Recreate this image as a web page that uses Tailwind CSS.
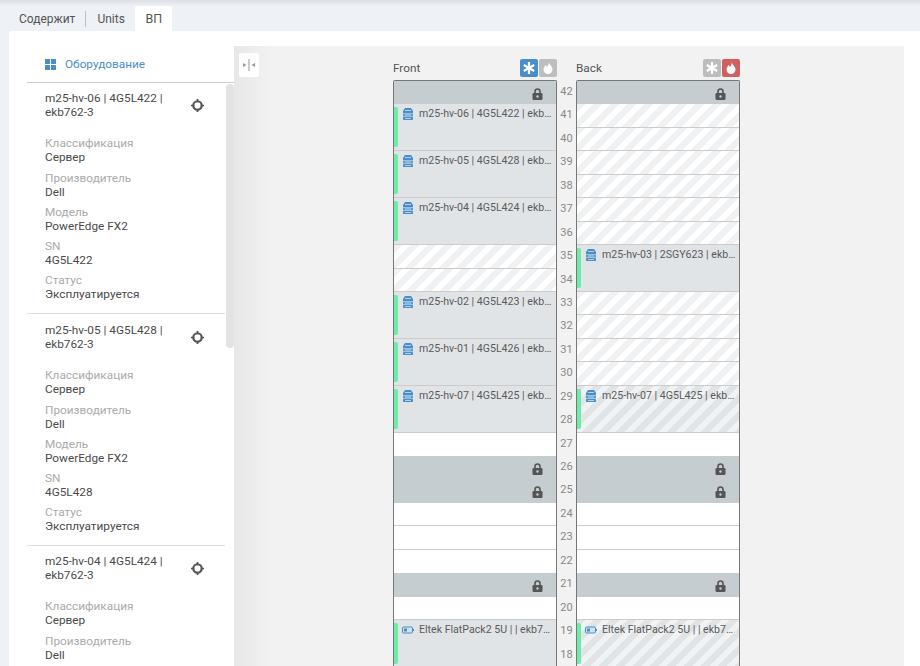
<!DOCTYPE html>
<html><head><meta charset="utf-8"><script src="https://cdn.jsdelivr.net/npm/@tailwindcss/browser@4"></script></head>
<body class="w-[920px] h-[666px] overflow-hidden bg-[#eef1f6] font-['Roboto',sans-serif] text-[11.8px] leading-[14px] text-[#4a4a4a]">
<div class="h-[6px] bg-gradient-to-b from-[#dcdfe5] to-[#eef1f6]"></div>
<div class="flex h-[25px] pl-[9px] items-stretch text-[12px] text-[#555]">
<div class="px-[10px] flex items-center"><span>Содержит</span></div>
<div class="w-px h-[16px] my-auto bg-[#b9c0c8]"></div>
<div class="pl-[11px] pr-[10px] flex items-center"><span>Units</span></div>
<div class="w-[37px] pl-px justify-center bg-white rounded-t-[2px] flex items-center text-[12.5px]"><span>ВП</span></div>
</div>
<div class="ml-[9px] h-[635px] bg-white rounded-tl-[2px] flex pr-[16px]">
<aside class="w-[225px] shrink-0 pl-[18px] flex flex-col overflow-hidden">
<div class="h-[52px] shrink-0 border-b border-[#ccc] flex items-center pl-[18px] pt-[22px] pb-[7px] text-[#4a8ec9]">
<svg class="w-[11px] h-[11px] mr-[9px]" viewBox="0 0 11 11" fill="#4a8ec9"><rect width="5" height="5"/><rect x="6" width="5" height="5"/><rect y="6" width="5" height="5"/><rect x="6" y="6" width="5" height="5"/></svg>
<span>Оборудование</span></div>
<div class="relative flex-1 overflow-hidden">
<div class="absolute right-0 top-[1px] w-[8px] h-[264px] rounded-[4px] bg-[#e3e3e3]"></div>
<section class="w-[198px] h-[231px] border-b border-[#ddd] pl-[18px] pt-[8px]">
<div class="flex items-center w-[159px] justify-between"><div class="w-[125px]">m25-hv-06 | 4G5L422 | ekb762-3</div><svg class="w-[13px] h-[13px]" viewBox="0 0 12 12" fill="none" stroke="#555"><circle cx="6" cy="6" r="3.900" stroke-width="2"/><path d="M6 0v3M6 9v3M0 6h3M9 6h3" stroke-width="1.600"/></svg></div>
<dl class="mt-[17.400px] flex flex-col gap-[6.200px]"><div><dt class="text-[#aaa]">Классификация</dt><dd>Сервер</dd></div><div><dt class="text-[#aaa]">Производитель</dt><dd>Dell</dd></div><div><dt class="text-[#aaa]">Модель</dt><dd>PowerEdge FX2</dd></div><div><dt class="text-[#aaa]">SN</dt><dd>4G5L422</dd></div><div><dt class="text-[#aaa]">Статус</dt><dd>Эксплуатируется</dd></div></dl>
</section>
<section class="w-[198px] h-[232px] border-b border-[#ddd] pl-[18px] pt-[9px]">
<div class="flex items-center w-[159px] justify-between"><div class="w-[125px]">m25-hv-05 | 4G5L428 | ekb762-3</div><svg class="w-[13px] h-[13px]" viewBox="0 0 12 12" fill="none" stroke="#555"><circle cx="6" cy="6" r="3.900" stroke-width="2"/><path d="M6 0v3M6 9v3M0 6h3M9 6h3" stroke-width="1.600"/></svg></div>
<dl class="mt-[17.400px] flex flex-col gap-[6.200px]"><div><dt class="text-[#aaa]">Классификация</dt><dd>Сервер</dd></div><div><dt class="text-[#aaa]">Производитель</dt><dd>Dell</dd></div><div><dt class="text-[#aaa]">Модель</dt><dd>PowerEdge FX2</dd></div><div><dt class="text-[#aaa]">SN</dt><dd>4G5L428</dd></div><div><dt class="text-[#aaa]">Статус</dt><dd>Эксплуатируется</dd></div></dl>
</section>
<section class="w-[198px] pl-[18px] pt-[8px]">
<div class="flex items-center w-[159px] justify-between"><div class="w-[125px]">m25-hv-04 | 4G5L424 | ekb762-3</div><svg class="w-[13px] h-[13px]" viewBox="0 0 12 12" fill="none" stroke="#555"><circle cx="6" cy="6" r="3.900" stroke-width="2"/><path d="M6 0v3M6 9v3M0 6h3M9 6h3" stroke-width="1.600"/></svg></div>
<dl class="mt-[17.400px] flex flex-col gap-[6.200px]"><div><dt class="text-[#aaa]">Классификация</dt><dd>Сервер</dd></div><div><dt class="text-[#aaa]">Производитель</dt><dd>Dell</dd></div></dl>
</section>
</div>
</aside>
<main class="flex-1 mt-[15px] bg-[linear-gradient(90deg,#e7e7e7,#f2f2f2_36px)] flex items-start overflow-hidden">
<button class="w-[20px] h-[24px] ml-[5px] mt-[7px] shrink-0 bg-white rounded-[2px] flex items-center justify-center">
<svg class="w-[14px] h-[14px]" viewBox="0 0 14 14"><path d="M1 5l3.500 2L1 9z" fill="#999"/><path d="M13 5L9.500 7 13 9z" fill="#999"/><rect x="6.500" y="1" width="1" height="12" fill="#8c9aa6"/></svg>
</button>
<div class="ml-[134px] pt-[13px] w-[347px] shrink-0">
<div class="flex h-[21px]">
<div class="w-[164px] flex justify-between items-start"><span class="mt-[2px] text-[#555]">Front</span>
<div class="flex gap-px">
<span class="w-[18px] h-[18px] rounded-[2px] bg-[#4a8ec9] flex items-center justify-center"><svg class="w-[12px] h-[12px]" viewBox="0 0 12 12" stroke="#fff" stroke-width="2.200"><path d="M6 0v12M.8 3l10.400 6M.8 9l10.400-6"/></svg></span>
<span class="w-[18px] h-[18px] rounded-[2px] bg-[#bdbdbd] flex items-center justify-center"><svg class="w-[12px] h-[12px]" viewBox="0 0 12 12" fill="#fff"><path d="M6.500 0c.5 2.500 4 4 4 7.500A4.500 4.500 0 0 1 6 12a4.500 4.500 0 0 1-4.500-4.500C1.500 5.500 3 4.500 3.500 3c.8.5 1.200 1.300 1.300 2C6 4 7 2 6.500 0z"/></svg></span>
</div></div>
<div class="w-[19px]"></div>
<div class="w-[164px] flex justify-between items-start"><span class="mt-[2px] text-[#555]">Back</span>
<div class="flex gap-px">
<span class="w-[18px] h-[18px] rounded-[2px] bg-[#bdbdbd] flex items-center justify-center"><svg class="w-[12px] h-[12px]" viewBox="0 0 12 12" stroke="#fff" stroke-width="2.200"><path d="M6 0v12M.8 3l10.400 6M.8 9l10.400-6"/></svg></span>
<span class="w-[18px] h-[18px] rounded-[2px] bg-[#d0605f] flex items-center justify-center"><svg class="w-[12px] h-[12px]" viewBox="0 0 12 12" fill="#fff"><path d="M6.500 0c.5 2.500 4 4 4 7.500A4.500 4.500 0 0 1 6 12a4.500 4.500 0 0 1-4.500-4.500C1.500 5.500 3 4.500 3.500 3c.8.5 1.200 1.300 1.300 2C6 4 7 2 6.500 0z"/></svg></span>
</div></div>
</div>
<div class="flex items-start">
<!-- Front -->
<div class="w-[164px] border border-[#777] border-b-0 rounded-t-[2px] bg-white text-[#5a5a5a] text-[10.600px]">
<div class="h-[23.450px] bg-[#c5cdd0] flex items-center justify-end pr-[13px]"><svg class="w-[11px] h-[12px] mt-[2px]" viewBox="0 0 11 12"><path d="M3 5V3.500a2.500 2.500 0 0 1 5 0V5" fill="none" stroke="#555" stroke-width="1.600"/><rect x=".5" y="5" width="10" height="7" rx="1.200" fill="#555"/><circle cx="5.500" cy="8.500" r="1.200" fill="#c5cdd0"/></svg></div>
<div class="h-[46.900px] bg-[#e1e4e7] border-b border-[#ccc] flex"><div class="w-[4px] shrink-0 mt-[3px] mb-[3px] rounded-r-[2px] bg-[#6eeba6]"></div><div class="flex min-w-0 mt-[3px] pl-[4px] pr-[3px]"><svg class="w-[12px] h-[12px] mt-px shrink-0" viewBox="0 0 12 12"><path d="M3 0h6l2 3v2H1V3z" fill="#4a8ec9"/><rect x="1" y="5.500" width="10" height="3" fill="#5b9bd0"/><rect x="1" y="9" width="10" height="3" rx=".8" fill="#4a8ec9"/><path d="M3 2.500h6M3 7h6M3 10.500h6" stroke="#cfe2f2" stroke-width=".8"/></svg><span class="truncate ml-[5px]">m25-hv-06 | 4G5L422 | ekb762-3</span></div></div>
<div class="h-[46.900px] bg-[#e1e4e7] border-b border-[#ccc] flex"><div class="w-[4px] shrink-0 mt-[3px] mb-[3px] rounded-r-[2px] bg-[#6eeba6]"></div><div class="flex min-w-0 mt-[3px] pl-[4px] pr-[3px]"><svg class="w-[12px] h-[12px] mt-px shrink-0" viewBox="0 0 12 12"><path d="M3 0h6l2 3v2H1V3z" fill="#4a8ec9"/><rect x="1" y="5.500" width="10" height="3" fill="#5b9bd0"/><rect x="1" y="9" width="10" height="3" rx=".8" fill="#4a8ec9"/><path d="M3 2.500h6M3 7h6M3 10.500h6" stroke="#cfe2f2" stroke-width=".8"/></svg><span class="truncate ml-[5px]">m25-hv-05 | 4G5L428 | ekb762-3</span></div></div>
<div class="h-[46.900px] bg-[#e1e4e7] border-b border-[#ccc] flex"><div class="w-[4px] shrink-0 mt-[3px] mb-[3px] rounded-r-[2px] bg-[#6eeba6]"></div><div class="flex min-w-0 mt-[3px] pl-[4px] pr-[3px]"><svg class="w-[12px] h-[12px] mt-px shrink-0" viewBox="0 0 12 12"><path d="M3 0h6l2 3v2H1V3z" fill="#4a8ec9"/><rect x="1" y="5.500" width="10" height="3" fill="#5b9bd0"/><rect x="1" y="9" width="10" height="3" rx=".8" fill="#4a8ec9"/><path d="M3 2.500h6M3 7h6M3 10.500h6" stroke="#cfe2f2" stroke-width=".8"/></svg><span class="truncate ml-[5px]">m25-hv-04 | 4G5L424 | ekb762-3</span></div></div>
<div class="h-[23.450px] border-b border-[#ccc] bg-[repeating-linear-gradient(135deg,#f0f1f3_0,#f0f1f3_6px,#fff_6px,#fff_12px)]"></div>
<div class="h-[23.450px] border-b border-[#ccc] bg-[repeating-linear-gradient(135deg,#f0f1f3_0,#f0f1f3_6px,#fff_6px,#fff_12px)]"></div>
<div class="h-[46.900px] bg-[#e1e4e7] border-b border-[#ccc] flex"><div class="w-[4px] shrink-0 mt-[3px] mb-[3px] rounded-r-[2px] bg-[#6eeba6]"></div><div class="flex min-w-0 mt-[3px] pl-[4px] pr-[3px]"><svg class="w-[12px] h-[12px] mt-px shrink-0" viewBox="0 0 12 12"><path d="M3 0h6l2 3v2H1V3z" fill="#4a8ec9"/><rect x="1" y="5.500" width="10" height="3" fill="#5b9bd0"/><rect x="1" y="9" width="10" height="3" rx=".8" fill="#4a8ec9"/><path d="M3 2.500h6M3 7h6M3 10.500h6" stroke="#cfe2f2" stroke-width=".8"/></svg><span class="truncate ml-[5px]">m25-hv-02 | 4G5L423 | ekb762-3</span></div></div>
<div class="h-[46.900px] bg-[#e1e4e7] border-b border-[#ccc] flex"><div class="w-[4px] shrink-0 mt-[3px] mb-[3px] rounded-r-[2px] bg-[#6eeba6]"></div><div class="flex min-w-0 mt-[3px] pl-[4px] pr-[3px]"><svg class="w-[12px] h-[12px] mt-px shrink-0" viewBox="0 0 12 12"><path d="M3 0h6l2 3v2H1V3z" fill="#4a8ec9"/><rect x="1" y="5.500" width="10" height="3" fill="#5b9bd0"/><rect x="1" y="9" width="10" height="3" rx=".8" fill="#4a8ec9"/><path d="M3 2.500h6M3 7h6M3 10.500h6" stroke="#cfe2f2" stroke-width=".8"/></svg><span class="truncate ml-[5px]">m25-hv-01 | 4G5L426 | ekb762-3</span></div></div>
<div class="h-[46.900px] bg-[#e1e4e7] border-b border-[#ccc] flex"><div class="w-[4px] shrink-0 mt-[3px] mb-[3px] rounded-r-[2px] bg-[#6eeba6]"></div><div class="flex min-w-0 mt-[3px] pl-[4px] pr-[3px]"><svg class="w-[12px] h-[12px] mt-px shrink-0" viewBox="0 0 12 12"><path d="M3 0h6l2 3v2H1V3z" fill="#4a8ec9"/><rect x="1" y="5.500" width="10" height="3" fill="#5b9bd0"/><rect x="1" y="9" width="10" height="3" rx=".8" fill="#4a8ec9"/><path d="M3 2.500h6M3 7h6M3 10.500h6" stroke="#cfe2f2" stroke-width=".8"/></svg><span class="truncate ml-[5px]">m25-hv-07 | 4G5L425 | ekb762-3</span></div></div>
<div class="h-[23.450px]"></div>
<div class="h-[23.450px] bg-[#c5cdd0] flex items-center justify-end pr-[13px]"><svg class="w-[11px] h-[12px] mt-[2px]" viewBox="0 0 11 12"><path d="M3 5V3.500a2.500 2.500 0 0 1 5 0V5" fill="none" stroke="#555" stroke-width="1.600"/><rect x=".5" y="5" width="10" height="7" rx="1.200" fill="#555"/><circle cx="5.500" cy="8.500" r="1.200" fill="#c5cdd0"/></svg></div>
<div class="h-[23.450px] bg-[#c5cdd0] flex items-center justify-end pr-[13px]"><svg class="w-[11px] h-[12px] mt-[2px]" viewBox="0 0 11 12"><path d="M3 5V3.500a2.500 2.500 0 0 1 5 0V5" fill="none" stroke="#555" stroke-width="1.600"/><rect x=".5" y="5" width="10" height="7" rx="1.200" fill="#555"/><circle cx="5.500" cy="8.500" r="1.200" fill="#c5cdd0"/></svg></div>
<div class="h-[23.450px] border-b border-[#ccc]"></div>
<div class="h-[23.450px] border-b border-[#ccc]"></div>
<div class="h-[23.450px]"></div>
<div class="h-[23.450px] bg-[#c5cdd0] flex items-center justify-end pr-[13px]"><svg class="w-[11px] h-[12px] mt-[2px]" viewBox="0 0 11 12"><path d="M3 5V3.500a2.500 2.500 0 0 1 5 0V5" fill="none" stroke="#555" stroke-width="1.600"/><rect x=".5" y="5" width="10" height="7" rx="1.200" fill="#555"/><circle cx="5.500" cy="8.500" r="1.200" fill="#c5cdd0"/></svg></div>
<div class="h-[23.450px] border-b border-[#ccc]"></div>
<div class="h-[46.900px] bg-[#e1e4e7] flex"><div class="w-[4px] shrink-0 mt-[3px] mb-[3px] rounded-r-[2px] bg-[#6eeba6]"></div><div class="flex min-w-0 mt-[3px] pl-[4px] pr-[3px]"><svg class="w-[12px] h-[12px] mt-px shrink-0" viewBox="0 0 12 12"><rect x=".5" y="3" width="10" height="6" rx="1" fill="#cfe2f2" stroke="#4a8ec9"/><rect x="2" y="4.500" width="3" height="3" fill="#4a8ec9"/><rect x="11" y="5" width="1" height="2" fill="#4a8ec9"/></svg><span class="truncate ml-[5px]">Eltek FlatPack2 5U | | ekb762-3</span></div></div>
</div>
<!-- Numbers -->
<div class="w-[19px] flex flex-col items-center pt-px text-[11px] text-[#888] leading-[22px]">
<span class="h-[23.450px]">42</span><span class="h-[23.450px]">41</span><span class="h-[23.450px]">40</span><span class="h-[23.450px]">39</span><span class="h-[23.450px]">38</span><span class="h-[23.450px]">37</span><span class="h-[23.450px]">36</span><span class="h-[23.450px]">35</span><span class="h-[23.450px]">34</span><span class="h-[23.450px]">33</span><span class="h-[23.450px]">32</span><span class="h-[23.450px]">31</span><span class="h-[23.450px]">30</span><span class="h-[23.450px]">29</span><span class="h-[23.450px]">28</span><span class="h-[23.450px]">27</span><span class="h-[23.450px]">26</span><span class="h-[23.450px]">25</span><span class="h-[23.450px]">24</span><span class="h-[23.450px]">23</span><span class="h-[23.450px]">22</span><span class="h-[23.450px]">21</span><span class="h-[23.450px]">20</span><span class="h-[23.450px]">19</span><span class="h-[23.450px]">18</span>
</div>
<!-- Back -->
<div class="w-[164px] border border-[#777] border-b-0 rounded-t-[2px] bg-white text-[#5a5a5a] text-[10.600px]">
<div class="h-[23.450px] bg-[#c5cdd0] flex items-center justify-end pr-[13px]"><svg class="w-[11px] h-[12px] mt-[2px]" viewBox="0 0 11 12"><path d="M3 5V3.500a2.500 2.500 0 0 1 5 0V5" fill="none" stroke="#555" stroke-width="1.600"/><rect x=".5" y="5" width="10" height="7" rx="1.200" fill="#555"/><circle cx="5.500" cy="8.500" r="1.200" fill="#c5cdd0"/></svg></div>
<div class="h-[23.450px] border-b border-[#ccc] bg-[repeating-linear-gradient(135deg,#f0f1f3_0,#f0f1f3_6px,#fff_6px,#fff_12px)]"></div>
<div class="h-[23.450px] border-b border-[#ccc] bg-[repeating-linear-gradient(135deg,#f0f1f3_0,#f0f1f3_6px,#fff_6px,#fff_12px)]"></div>
<div class="h-[23.450px] border-b border-[#ccc] bg-[repeating-linear-gradient(135deg,#f0f1f3_0,#f0f1f3_6px,#fff_6px,#fff_12px)]"></div>
<div class="h-[23.450px] border-b border-[#ccc] bg-[repeating-linear-gradient(135deg,#f0f1f3_0,#f0f1f3_6px,#fff_6px,#fff_12px)]"></div>
<div class="h-[23.450px] border-b border-[#ccc] bg-[repeating-linear-gradient(135deg,#f0f1f3_0,#f0f1f3_6px,#fff_6px,#fff_12px)]"></div>
<div class="h-[23.450px] border-b border-[#ccc] bg-[repeating-linear-gradient(135deg,#f0f1f3_0,#f0f1f3_6px,#fff_6px,#fff_12px)]"></div>
<div class="h-[46.900px] bg-[#e1e4e7] border-b border-[#ccc] flex"><div class="w-[4px] shrink-0 mt-[3px] mb-[3px] rounded-r-[2px] bg-[#6eeba6]"></div><div class="flex min-w-0 mt-[3px] pl-[4px] pr-[3px]"><svg class="w-[12px] h-[12px] mt-px shrink-0" viewBox="0 0 12 12"><path d="M3 0h6l2 3v2H1V3z" fill="#4a8ec9"/><rect x="1" y="5.500" width="10" height="3" fill="#5b9bd0"/><rect x="1" y="9" width="10" height="3" rx=".8" fill="#4a8ec9"/><path d="M3 2.500h6M3 7h6M3 10.500h6" stroke="#cfe2f2" stroke-width=".8"/></svg><span class="truncate ml-[5px]">m25-hv-03 | 2SGY623 | ekb762-3</span></div></div>
<div class="h-[23.450px] border-b border-[#ccc] bg-[repeating-linear-gradient(135deg,#f0f1f3_0,#f0f1f3_6px,#fff_6px,#fff_12px)]"></div>
<div class="h-[23.450px] border-b border-[#ccc] bg-[repeating-linear-gradient(135deg,#f0f1f3_0,#f0f1f3_6px,#fff_6px,#fff_12px)]"></div>
<div class="h-[23.450px] border-b border-[#ccc] bg-[repeating-linear-gradient(135deg,#f0f1f3_0,#f0f1f3_6px,#fff_6px,#fff_12px)]"></div>
<div class="h-[23.450px] border-b border-[#ccc] bg-[repeating-linear-gradient(135deg,#f0f1f3_0,#f0f1f3_6px,#fff_6px,#fff_12px)]"></div>
<div class="h-[46.900px] border-b border-[#ccc] flex bg-[repeating-linear-gradient(135deg,#e1e4e7_0,#e1e4e7_6px,#f1f2f3_6px,#f1f2f3_12px)]"><div class="w-[4px] shrink-0 mt-[3px] mb-[3px] rounded-r-[2px] bg-[#6eeba6]"></div><div class="flex min-w-0 mt-[3px] pl-[4px] pr-[3px]"><svg class="w-[12px] h-[12px] mt-px shrink-0" viewBox="0 0 12 12"><path d="M3 0h6l2 3v2H1V3z" fill="#4a8ec9"/><rect x="1" y="5.500" width="10" height="3" fill="#5b9bd0"/><rect x="1" y="9" width="10" height="3" rx=".8" fill="#4a8ec9"/><path d="M3 2.500h6M3 7h6M3 10.500h6" stroke="#cfe2f2" stroke-width=".8"/></svg><span class="truncate ml-[5px]">m25-hv-07 | 4G5L425 | ekb762-3</span></div></div>
<div class="h-[23.450px]"></div>
<div class="h-[23.450px] bg-[#c5cdd0] flex items-center justify-end pr-[13px]"><svg class="w-[11px] h-[12px] mt-[2px]" viewBox="0 0 11 12"><path d="M3 5V3.500a2.500 2.500 0 0 1 5 0V5" fill="none" stroke="#555" stroke-width="1.600"/><rect x=".5" y="5" width="10" height="7" rx="1.200" fill="#555"/><circle cx="5.500" cy="8.500" r="1.200" fill="#c5cdd0"/></svg></div>
<div class="h-[23.450px] bg-[#c5cdd0] flex items-center justify-end pr-[13px]"><svg class="w-[11px] h-[12px] mt-[2px]" viewBox="0 0 11 12"><path d="M3 5V3.500a2.500 2.500 0 0 1 5 0V5" fill="none" stroke="#555" stroke-width="1.600"/><rect x=".5" y="5" width="10" height="7" rx="1.200" fill="#555"/><circle cx="5.500" cy="8.500" r="1.200" fill="#c5cdd0"/></svg></div>
<div class="h-[23.450px] border-b border-[#ccc]"></div>
<div class="h-[23.450px] border-b border-[#ccc]"></div>
<div class="h-[23.450px]"></div>
<div class="h-[23.450px] bg-[#c5cdd0] flex items-center justify-end pr-[13px]"><svg class="w-[11px] h-[12px] mt-[2px]" viewBox="0 0 11 12"><path d="M3 5V3.500a2.500 2.500 0 0 1 5 0V5" fill="none" stroke="#555" stroke-width="1.600"/><rect x=".5" y="5" width="10" height="7" rx="1.200" fill="#555"/><circle cx="5.500" cy="8.500" r="1.200" fill="#c5cdd0"/></svg></div>
<div class="h-[23.450px] border-b border-[#ccc]"></div>
<div class="h-[46.900px] flex bg-[repeating-linear-gradient(135deg,#e1e4e7_0,#e1e4e7_6px,#f1f2f3_6px,#f1f2f3_12px)]"><div class="w-[4px] shrink-0 mt-[3px] mb-[3px] rounded-r-[2px] bg-[#6eeba6]"></div><div class="flex min-w-0 mt-[3px] pl-[4px] pr-[3px]"><svg class="w-[12px] h-[12px] mt-px shrink-0" viewBox="0 0 12 12"><rect x=".5" y="3" width="10" height="6" rx="1" fill="#cfe2f2" stroke="#4a8ec9"/><rect x="2" y="4.500" width="3" height="3" fill="#4a8ec9"/><rect x="11" y="5" width="1" height="2" fill="#4a8ec9"/></svg><span class="truncate ml-[5px]">Eltek FlatPack2 5U | | ekb762-3</span></div></div>
</div>
</div>
</div>
</main>
</div>
</body></html>
